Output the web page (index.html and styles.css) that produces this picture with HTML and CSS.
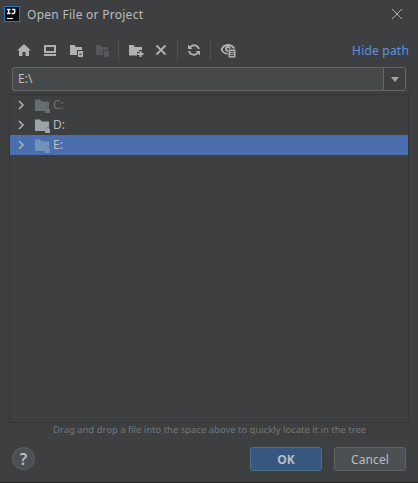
FILE: index.html
```html
<!DOCTYPE html>
<html lang="en">
<head>
<meta charset="utf-8">
<title>Open File or Project</title>
<link rel="stylesheet" href="styles.css">
</head>
<body>
<svg class="defs" aria-hidden="true">
  <symbol id="drive" viewBox="0 0 18 16"><path d="M1 1.500h5l2 2h7v6h-2.500l-1.500 2v1.500H1z"/><path d="M11 11h1V9.500h3V11h1v4h-5z"/></symbol>
  <symbol id="chevron" viewBox="0 0 8 10"><path d="M2 1l4 4-4 4"/></symbol>
</svg>
<main class="dialog">
  <header class="titlebar">
    <svg class="logo" viewBox="0 0 16 16"><rect x=".5" y=".5" width="15" height="15" fill="#05080d" stroke="#2675bf"/><path d="M3 3.500h3.500M4.750 3.500v4M3 7.500h3.500M8 3.500h2.700V6q0 1.500-1.500 1.500H7.500" fill="none" stroke="#f0f2f4" stroke-width="1.400"/><path d="M3 12.500h6" stroke="#f0f2f4" stroke-width="1.200"/></svg>
    <h1>Open File or Project</h1>
    <svg class="close" viewBox="0 0 12 12"><path d="M1 1l10 10M11 1L1 11"/></svg>
  </header>
  <nav class="toolbar">
    <svg class="icon" viewBox="0 0 16 16"><path d="M8 2l7 6.500h-2V14H9.500v-4h-3v4H3V8.500H1z"/></svg>
    <svg class="icon" viewBox="0 0 16 16"><path fill-rule="evenodd" d="M2 3h12v8H2zM4 5v4h8V5zM2 12h12v2H2z"/></svg>
    <svg class="icon" viewBox="0 0 16 16"><path d="M2 3h4.500L8 5h6v3H9v5H2z"/><path fill-rule="evenodd" d="M10 9h5v6h-5zM11.500 11.500V13h2v-1.500z"/></svg>
    <svg class="icon disabled" viewBox="0 0 16 16"><path d="M2 3h4.500L8 5h6v3H9v5H2z"/><path d="M10 9h5v6h-5z"/></svg>
    <i class="separator"></i>
    <svg class="icon" viewBox="0 0 16 16"><path d="M1 3h4.500L7 5h7v3h-3v2H9v3.500H1z"/><path d="M11.500 9h2v2h2v2h-2v2h-2v-2h-2v-2h2z"/></svg>
    <svg class="icon remove" viewBox="0 0 16 16"><path d="M3.500 3.500l9 9M12.500 3.500l-9 9"/></svg>
    <i class="separator"></i>
    <svg class="icon refresh" viewBox="0 0 16 16"><path class="arc" d="M4 5.500A5 5 0 0 1 13 7M12 10.500A5 5 0 0 1 3 9"/><path d="M2 2.500V7h4.500zM14 13.500V9H9.500z"/></svg>
    <i class="separator"></i>
    <svg class="icon" viewBox="0 0 16 16"><path class="arc" d="M7.500 11.700C4.500 11.700 2.500 9.700 1.500 7.500 3 4.500 5 3 8 3s5 1.500 6.300 3.500"/><path class="arc" d="M8 9A2 2 0 1 1 10 6.700"/><path fill-rule="evenodd" d="M8.500 7.500h7v8h-7zM10 9.300v1h4v-1zM10 11.200v1h4v-1zM10 13.100v1h4v-1z"/></svg>
    <a class="hide">Hide path</a>
  </nav>
  <div class="path"><span>E:\</span><b class="drop"><svg viewBox="0 0 8 5"><path d="M0 0h8L4 5z"/></svg></b></div>
  <ul class="tree">
    <li class="muted"><svg class="chevron"><use href="#chevron"/></svg><svg class="drive"><use href="#drive"/></svg><span>C:</span></li>
    <li><svg class="chevron"><use href="#chevron"/></svg><svg class="drive"><use href="#drive"/></svg><span>D:</span></li>
    <li class="selected"><svg class="chevron"><use href="#chevron"/></svg><svg class="drive"><use href="#drive"/></svg><span>E:</span></li>
  </ul>
  <p class="hint">Drag and drop a file into the space above to quickly locate it in the tree</p>
  <footer><button class="help">?</button><button class="ok">OK</button><button class="cancel">Cancel</button></footer>
</main>
</body>
</html>
```
FILE: styles.css
```css
* { box-sizing: border-box; }
body { margin: 0; background: #3d3f41; color: #bbbdbf; font: 12px/20px "Noto Sans", sans-serif; }
svg { display: block; flex: none; }
.defs { position: absolute; width: 0; height: 0; }
.dialog { width: 418px; height: 483px; display: flex; flex-direction: column; border-bottom: 1px solid #242628; }
.titlebar { height: 30px; display: flex; align-items: center; padding: 0 15px 2px 4px; }
.logo { width: 16px; height: 16px; margin-right: 7px; }
h1 { margin: 0; padding-top: 2px; font-size: 12px; font-weight: 400; flex: 1; letter-spacing: .27px; }
.close { width: 12px; height: 12px; fill: none; stroke: #a9abad; stroke-width: 1; }
.toolbar { height: 37px; display: flex; align-items: center; gap: 10px; padding: 3px 9px 0 16px; }
.icon { width: 16px; height: 16px; fill: #afb1b3; }
.disabled { fill: #55585a; }
.remove, .arc { fill: none; stroke: #afb1b3; stroke-width: 1.800; }
.remove, .refresh { margin-left: -1px; }
.separator { width: 1px; height: 20px; background: #4f5254; margin: 0 -1px 0 -2px; }
.hide { margin-left: auto; padding-top: 2px; color: #5894e2; letter-spacing: .2px; }
.path { height: 24px; margin: 0 12px 3px; display: flex; border: 1px solid #646668; border-radius: 2px; background: #45494a; }
.path span { flex: 1; padding-left: 5px; line-height: 22px; }
.drop { width: 22px; border-left: 1px solid #646668; background: #3d3f41; display: grid; place-items: center; }
.drop svg { width: 8px; height: 5px; fill: #a3a5a7; }
.tree { height: 329px; margin: 0 9px; padding: 0; list-style: none; border: 1px solid #323436; }
.tree li { height: 20px; display: flex; align-items: center; }
.chevron { width: 8px; height: 10px; margin: 0 9px 0 7px; fill: none; stroke: #adb0b2; stroke-width: 1.600; }
.drive { width: 18px; height: 16px; margin: 1px 1px 0 0; fill: #9ca4a9; }
.muted { color: #717375; }
.muted .drive { fill: #686d70; }
.selected { background: #4b6eaf; }
.selected .drive { fill: #7292b9; }
.hint { margin: 0; height: 24px; line-height: 14px; padding-left: 53px; font-size: 9.500px; letter-spacing: -.02px; color: #747678; white-space: nowrap; }
footer { display: flex; height: 24px; padding: 0 12px; }
button { width: 72px; height: 24px; padding: 1px 0 0; border: 1px solid #5e6263; border-radius: 3px; color: #bbbdbf; font: 12px/20px "Noto Sans", sans-serif; background: #4c5052; }
.help { width: 23px; height: 23px; padding: 0; border-radius: 50%; font-size: 16px; font-weight: 600; }
.ok { margin: 0 12px 0 auto; font-weight: 700; background: #365880; border-color: #4c708c; }
.cancel { letter-spacing: .1px; }
```
